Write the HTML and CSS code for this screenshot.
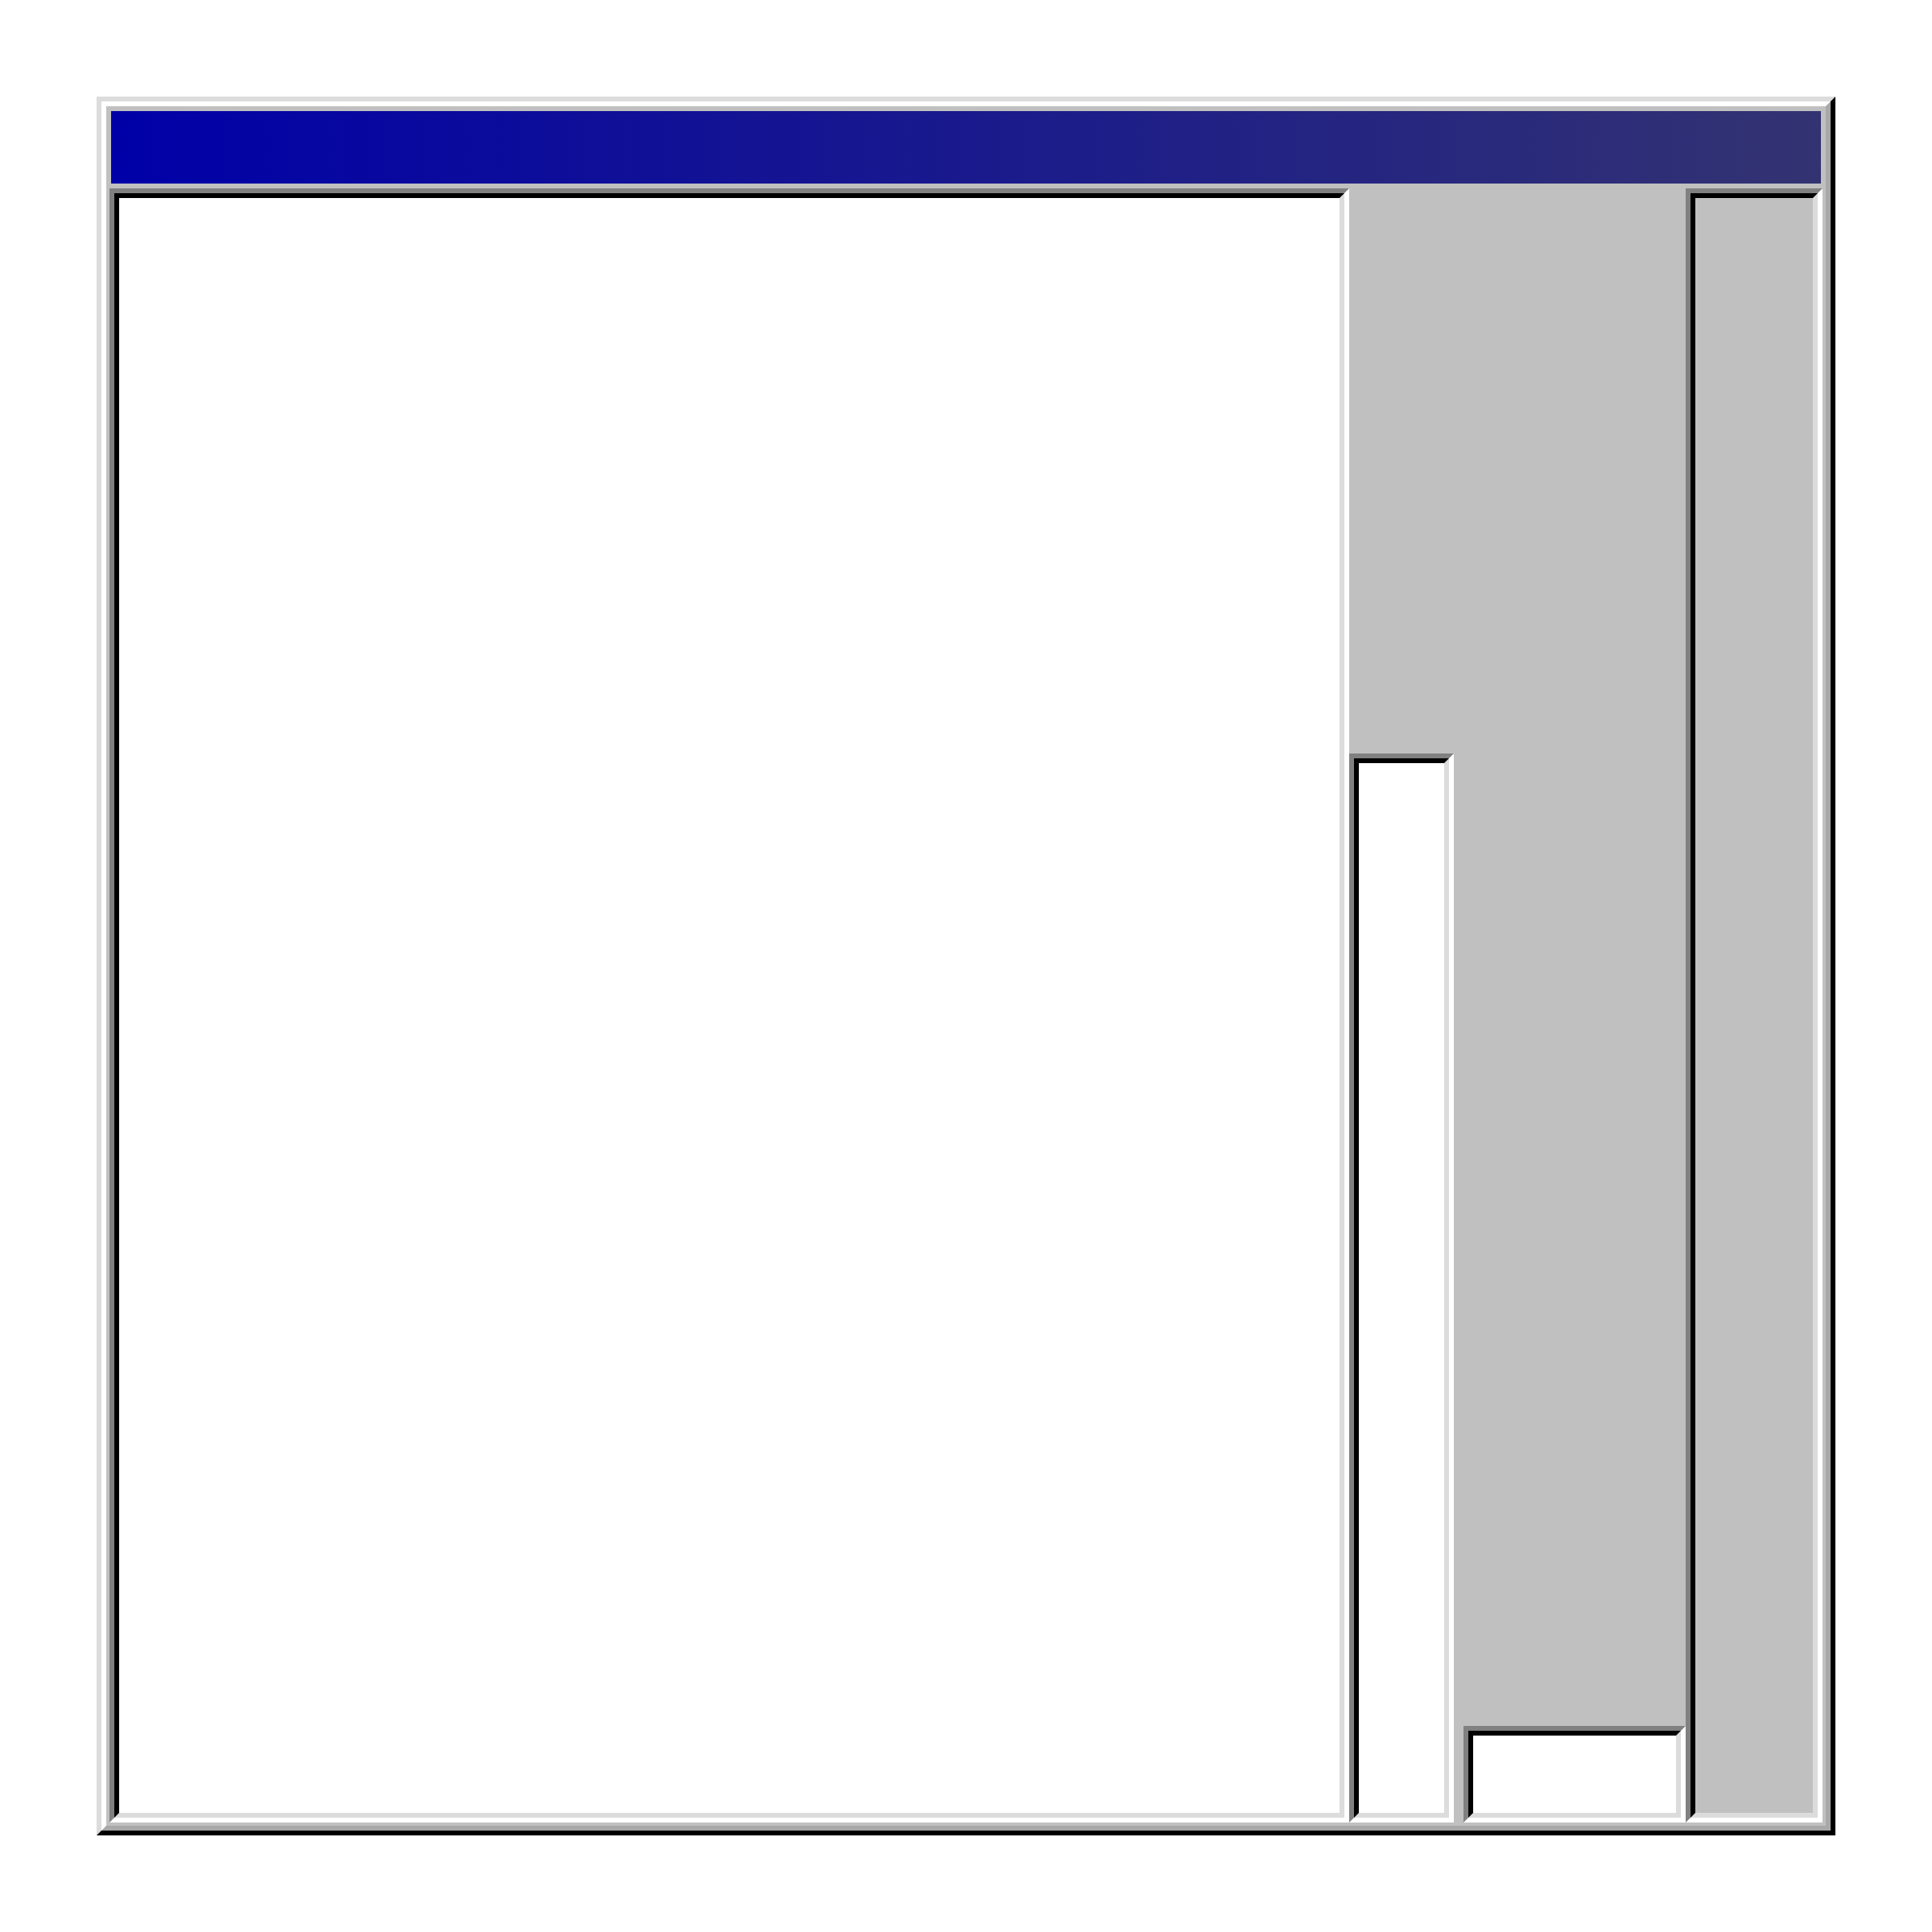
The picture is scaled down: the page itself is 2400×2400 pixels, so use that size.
FILE: index.html
```html
<!DOCTYPE html>
<html>
<head>
<meta charset="utf-8">
<title>Window</title>
<link rel="stylesheet" href="styles.css">
</head>
<body>
<div class="frame">
  <div class="frame-inner">
    <div class="titlebar"></div>
    <div class="body">
      <div class="inset pane"><div class="inset-in white"></div></div>
      <div class="middle">
        <div class="inset vbar"><div class="inset-in white"></div></div>
        <div class="inset smallbox"><div class="inset-in white"></div></div>
      </div>
      <div class="inset side"><div class="inset-in grey"></div></div>
    </div>
  </div>
</div>
</body>
</html>
```
FILE: styles.css
```css
html, body {
  margin: 0;
  padding: 0;
  background: #fff;
}
.frame {
  box-sizing: border-box;
  margin: 120px;
  width: 2160px;
  height: 2160px;
  border: 6px solid;
  border-color: #dcdcdc #000 #000 #dcdcdc;
}
.frame-inner {
  box-sizing: border-box;
  height: 100%;
  border: 6px solid;
  border-color: #fff #a8a8a8 #a8a8a8 #fff;
  background: #c0c0c0;
  padding: 4px;
  display: flex;
  flex-direction: column;
}
.titlebar {
  margin: 2px 2px 0 2px;
  height: 90px;
  flex: none;
  background: linear-gradient(to right, #0000a8, #333372);
}
.body {
  margin-top: 6px;
  flex: 1;
  display: flex;
  min-height: 0;
}
.inset {
  box-sizing: border-box;
  border: 6px solid;
  border-color: #808080 #fff #fff #808080;
  display: flex;
}
.inset-in {
  box-sizing: border-box;
  flex: 1;
  border: 6px solid;
  border-color: #000 #dcdcdc #dcdcdc #000;
}
.white { background: #fff; }
.grey { background: #c0c0c0; }
.pane {
  width: 1540px;
  flex: none;
}
.middle {
  flex: 1;
  display: flex;
  align-items: flex-end;
  gap: 12px;
}
.vbar {
  width: 130px;
  height: 1328px;
  flex: none;
}
.smallbox {
  width: 276px;
  height: 120px;
  flex: none;
}
.side {
  width: 170px;
  flex: none;
}
```
